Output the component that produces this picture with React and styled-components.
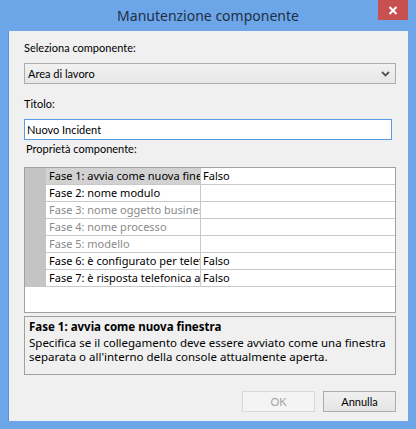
import React from 'react'
import styled, { createGlobalStyle, css } from 'styled-components'

const Global = createGlobalStyle`
  html, body { margin: 0; padding: 0; background: #6ca6e9; }
  body { font-family: Lato, "Noto Sans", sans-serif; }
`

const rows = [
  { name: 'Fase 1: avvia come nuova finestra', value: 'Falso', selected: true },
  { name: 'Fase 2: nome modulo', value: '' },
  { name: 'Fase 3: nome oggetto business', value: '', muted: true },
  { name: 'Fase 4: nome processo', value: '', muted: true },
  { name: 'Fase 5: modello', value: '', muted: true },
  { name: 'Fase 6: è configurato per telefonia', value: 'Falso' },
  { name: 'Fase 7: è risposta telefonica automatica', value: 'Falso' },
]

const CloseIcon = () => (
  <svg width="10" height="9" viewBox="0 0 10 9">
    <path d="M1.5 1 L8.5 8 M8.5 1 L1.5 8" stroke="#fff" strokeWidth="2" fill="none" />
  </svg>
)

const Chevron = () => (
  <svg width="9" height="6" viewBox="0 0 9 6">
    <path d="M1 1 L4.5 4.5 L8 1" stroke="#555" strokeWidth="1.8" fill="none" />
  </svg>
)

const App = () => {
  return (
    <Window>
      <Global />
      <TitleBar>
        <Title>Manutenzione componente</Title>
        <CloseButton><CloseIcon /></CloseButton>
      </TitleBar>
      <Client>
        <Label>Seleziona componente:</Label>
        <Combo>
          <span>Area di lavoro</span>
          <Chevron />
        </Combo>
        <Label gap={12}>Titolo:</Label>
        <TextBox>Nuovo Incident</TextBox>
        <Label gap={1} indent>Proprietà componente:</Label>
        <Grid>
          {rows.map((r, i) => (
            <Row key={i}>
              <RowHead />
              <NameCell selected={r.selected} muted={r.muted}>{r.name}</NameCell>
              <ValueCell>{r.value}</ValueCell>
            </Row>
          ))}
        </Grid>
        <Description>
          <DescTitle>Fase 1: avvia come nuova finestra</DescTitle>
          <DescText>
            Specifica se il collegamento deve essere avviato come una finestra
            separata o all'interno della console attualmente aperta.
          </DescText>
        </Description>
        <Buttons>
          <Button disabled>OK</Button>
          <Button>Annulla</Button>
        </Buttons>
      </Client>
    </Window>
  )
}

const Window = styled.div`
  width: 416px;
  height: 429px;
  background: #6ca6e9;
  display: flex;
  flex-direction: column;
  padding: 0 8px 8px 8px;
  box-sizing: border-box;
`

const TitleBar = styled.div`
  height: 31px;
  display: flex;
  align-items: flex-start;
  justify-content: center;
  position: relative;
`

const Title = styled.div`
  margin-top: 6px;
  font-family: "Noto Sans", sans-serif;
  font-size: 14px;
  color: #1f2f44;
`

const CloseButton = styled.div`
  position: absolute;
  top: 0;
  right: 0;
  width: 30px;
  height: 20px;
  background: #c75050;
  display: flex;
  align-items: center;
  justify-content: center;
`

const Client = styled.div`
  flex: 1;
  background: #f0f0f0;
  border-left: 1px solid #5b95d6;
  display: flex;
  flex-direction: column;
  padding: 9px 12px 0 15px;
  font-size: 11px;
  color: #000;
`

const Label = styled.div`
  height: 15px;
  line-height: 15px;
  margin-top: ${p => (p.gap !== undefined ? p.gap : 0)}px;
  padding-left: ${p => (p.indent ? 2 : 0)}px;
`

const Combo = styled.div`
  margin-top: 8px;
  height: 21px;
  box-sizing: border-box;
  border: 1px solid #acacac;
  background: linear-gradient(#f2f2f2, #e6e6e6);
  display: flex;
  align-items: center;
  justify-content: space-between;
  padding: 0 5px 0 3px;
`

const TextBox = styled.div`
  margin-top: 8px;
  margin-right: 4px;
  height: 21px;
  box-sizing: border-box;
  border: 1px solid #569de5;
  background: #fff;
  line-height: 19px;
  padding-left: 2px;
`

const Grid = styled.div`
  margin-top: 11px;
  height: 146px;
  box-sizing: border-box;
  border: 1px solid #a0a0a0;
  background: #fff;
  font-family: "Noto Sans", sans-serif;
  font-size: 11px;
`

const Row = styled.div`
  display: grid;
  grid-template-columns: 21px 155px 1fr;
  height: 17px;
`

const RowHead = styled.div`
  background: #c4c4c4;
`

const cellBase = css`
  box-sizing: border-box;
  border-bottom: 1px solid #c8c8c8;
  line-height: 16px;
  white-space: nowrap;
  overflow: hidden;
`

const NameCell = styled.div`
  ${cellBase}
  padding-left: 3px;
  border-right: 1px solid #c8c8c8;
  color: ${p => (p.muted ? '#8a8a8a' : '#000')};
  background: ${p => (p.selected ? '#d2d2d2' : '#fff')};
`

const ValueCell = styled.div`
  ${cellBase}
  padding-left: 2px;
`

const Description = styled.div`
  margin-top: 3px;
  height: 59px;
  box-sizing: border-box;
  border: 1px solid #a0a0a0;
  padding: 2px 4px;
  font-family: "Noto Sans", sans-serif;
  font-size: 11.5px;
`

const DescTitle = styled.div`
  font-weight: bold;
  line-height: 15px;
`

const DescText = styled.div`
  line-height: 14px;
  margin-top: 2px;
`

const Buttons = styled.div`
  margin-top: 16px;
  display: flex;
  justify-content: flex-end;
  gap: 8px;
`

const Button = styled.div`
  width: 73px;
  height: 21px;
  box-sizing: border-box;
  display: flex;
  align-items: center;
  justify-content: center;
  ${p => p.disabled
    ? css`
      border: 1px solid #d9d9d9;
      background: #f4f4f4;
      color: #a3a3a3;
    `
    : css`
      border: 1px solid #acacac;
      background: linear-gradient(#f0f0f0, #e5e5e5);
      color: #000;
    `}
`

export default App
